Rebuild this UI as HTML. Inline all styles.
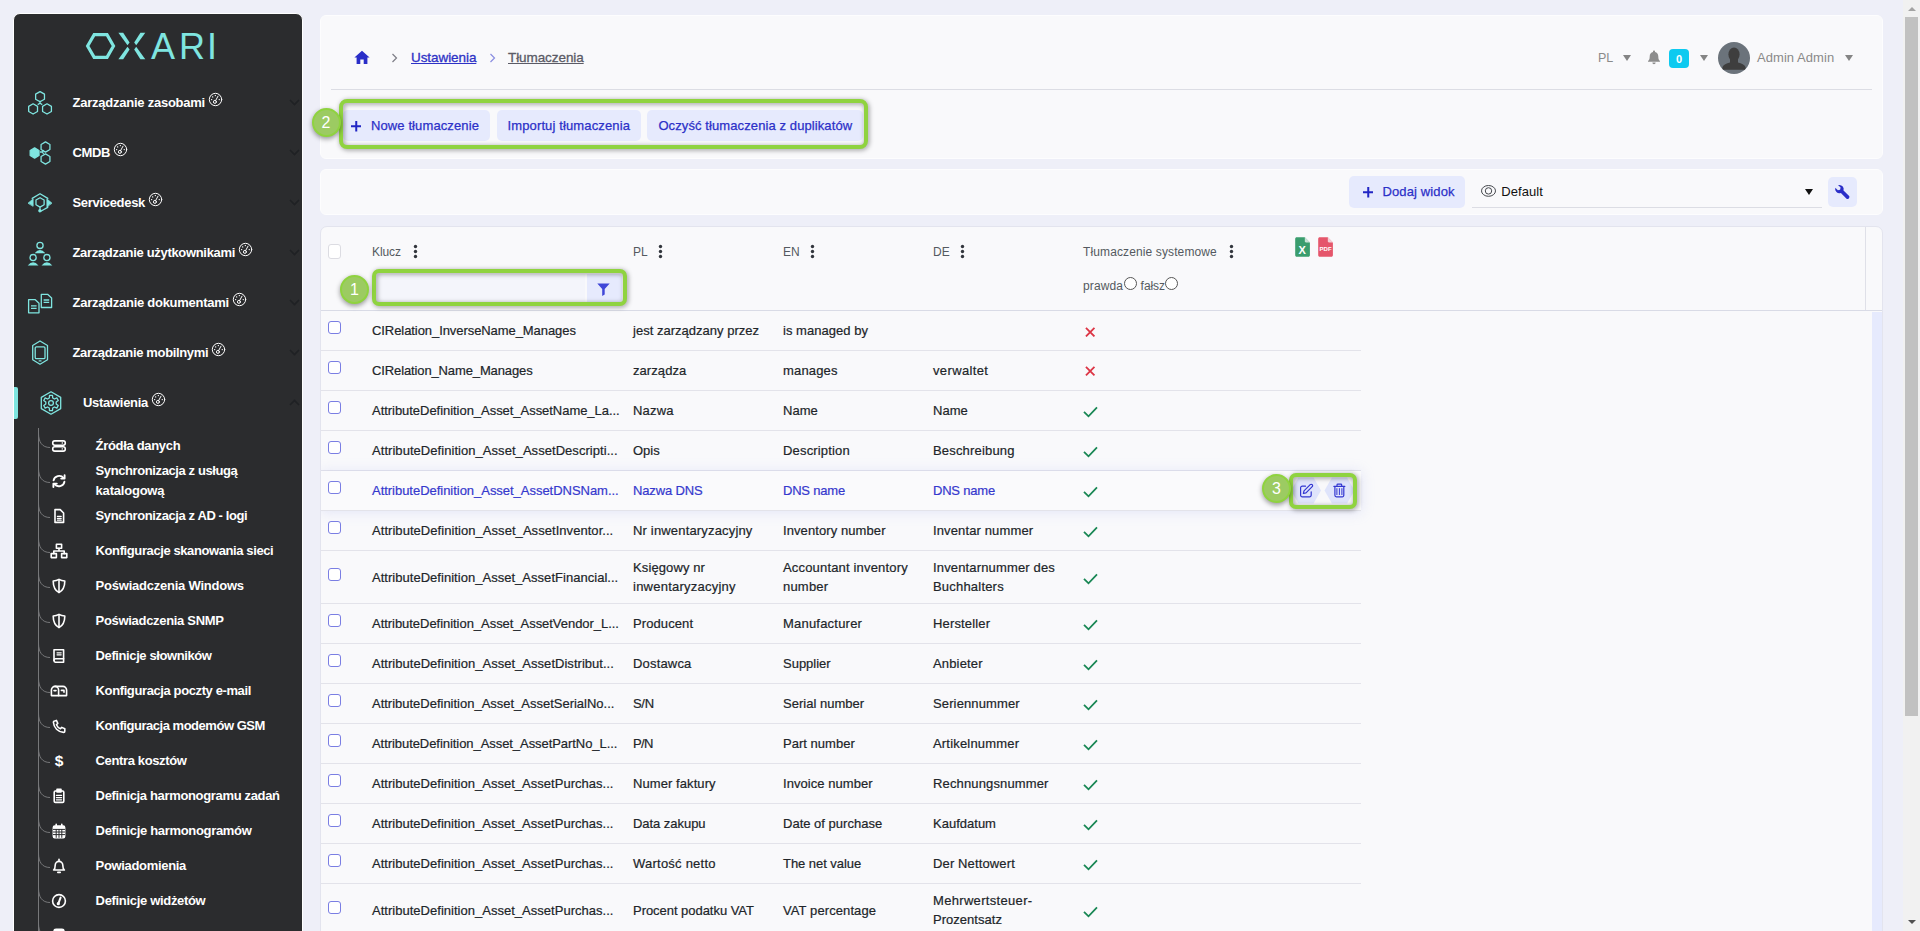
<!DOCTYPE html>
<html lang="pl">
<head>
<meta charset="utf-8">
<title>Tłumaczenia</title>
<style>
*{box-sizing:border-box;margin:0;padding:0}
html,body{width:1920px;height:931px;overflow:hidden}
body{background:#eeeff8;font-family:"Liberation Sans",sans-serif;font-size:13px;color:#212529;position:relative}
.abs{position:absolute}
svg{display:block}
/* ---------- sidebar ---------- */
#side{position:absolute;left:13px;top:13px;width:290px;height:930px;background:#2b2c2e;border:1px solid #fff;border-radius:7px 7px 0 0;overflow:hidden}
#side .logo{position:absolute;left:70px;top:16px}
.mi{display:block;position:absolute;left:0;width:288px;height:50px}
.mi .ic{position:absolute;left:12px;top:12px;width:28px;height:28px}
.mi .tx{position:absolute;left:58.5px;top:16px;font-size:13px;font-weight:700;color:#fff;white-space:nowrap;line-height:20px}
.mi .gg{position:absolute;top:15px}
.mi .ch{position:absolute;left:275px;top:22px}
.mi.act .ic{left:23px}
.mi.act .tx{left:69px}
.mi.act:before{content:"";position:absolute;left:0;top:10px;width:4px;height:32px;background:#7fe5e0;border-radius:0 2px 2px 0}
.si{display:block;position:absolute;left:0;width:288px;height:35px}
.si .ic{position:absolute;left:36px;top:10px;width:18px;height:16px}
.si .tx{position:absolute;left:81.6px;top:8px;font-size:13px;font-weight:700;color:#fff;white-space:nowrap;line-height:20px}
.si .br{position:absolute;left:24px;top:5px}
#tree{position:absolute;left:24px;top:414px;width:1px;height:520px;background:#77787a}
/* ---------- cards ---------- */
.card{position:absolute;left:320px;width:1563px;background:#f9f9fb;border-radius:6px;border:1px solid #fdfdfe}
#c1{top:15px;height:144px}
#c2{top:169px;height:46px}
#c3{top:226px;height:720px;border:1px solid #e3e4ee;border-radius:7px 7px 0 0}
/* annotations */
.gbox{position:absolute;border:4px solid #8fd33f;border-radius:8px;filter:drop-shadow(1px 1.5px 2.5px rgba(0,0,0,.42))}
.gnum{position:absolute;width:29px;height:29px;border-radius:50%;background:#9ccb62;border:2px solid #8fd33f;color:#fff;font-size:16px;line-height:26px;text-align:center;box-shadow:0 2px 5px rgba(0,0,0,.4)}
/* header */
.bc{position:absolute;top:50px;font-size:13.5px;line-height:16px;-webkit-text-stroke:.3px;text-decoration:underline;white-space:nowrap}
.btn{-webkit-text-stroke:.25px;border:0;padding:0;font-family:inherit;text-align:left;display:block;position:absolute;top:110px;height:31px;background:#e6eafd;border-radius:5px;color:#2c30c8;font-size:13px;line-height:31px;white-space:nowrap}
.btn span{position:absolute;top:0}
.tri{position:absolute;width:0;height:0;border-left:4px solid transparent;border-right:4px solid transparent;border-top:6px solid #858585}
/* table */
.th{position:absolute;font-size:12px;color:#545960;white-space:nowrap;line-height:14px}
.row{position:absolute;left:0;width:1040px;border-bottom:1px solid #e3e3ea}
.row .cb{-webkit-appearance:none;appearance:none;margin:0;display:block;position:absolute;left:7px;width:13px;height:13px;border:1px solid #7a7ee3;border-radius:3px;background:#fff}
.row .c{-webkit-text-stroke:.2px;position:absolute;font-size:13px;line-height:19px;color:#212529;white-space:nowrap}
.row.hv .c{color:#3538cd}
.row.hv{background:#fafafc;box-shadow:0 1px 12px 1px rgba(150,160,235,.2)}
.row svg.mk{position:absolute;left:762px}
</style>
</head>
<body>

<div id="side">
<svg class="logo" width="136" height="32" viewBox="0 0 136 32" role="img" aria-label="OXARI"><title>OXARI</title>
<g fill="none" stroke="#7fe5e0" stroke-width="3.2" stroke-linejoin="miter"><polygon points="3.6,16 10.2,4.6 23,4.6 29.5,16 23,27.4 10.2,27.4"/>
<g fill="#7fe5e0" stroke="none"><polygon points="34.4,2.8 39.2,2.8 45.6,12.5 43.5,15.2"/><polygon points="34.4,29.2 39.2,29.2 45.6,19.5 43.5,16.8"/><polygon points="61.3,2.8 56.4,2.8 50.2,12.5 52.2,15.2"/><polygon points="61.3,29.2 56.4,29.2 50.2,19.5 52.2,16.8"/></g></g>
<text y="28.9" font-family="Liberation Sans, sans-serif" font-size="36" fill="#7fe5e0" x="67 95.1 123">ARI</text></svg>
<a class="mi" style="top:63px"><div class="ic"><svg width="28" height="28" viewBox="0 0 28 28" fill="none" stroke="#7fe5e0" stroke-width="1.3" stroke-linejoin="round"><polygon points="14.05,2.6 9.63,5.15 9.63,10.25 14.05,12.8 18.47,10.25 18.47,5.15"/><polygon points="7.1,14.8 2.68,17.35 2.68,22.45 7.1,25 11.52,22.45 11.52,17.35"/><polygon points="21,14.8 16.58,17.35 16.58,22.45 21,25 25.42,22.45 25.42,17.35"/><path d="M14 11.8v2.4M14 14.2l-2.3 1.4M14 14.2l2.3 1.4"/></svg></div><div class="tx" style="letter-spacing:-0.24px">Zarządzanie zasobami</div><svg class="gg" style="left:193.8px" width="15" height="15" viewBox="0 0 15 15" fill="none" stroke="#fff" stroke-width="1" stroke-linecap="round"><circle cx="7.5" cy="7.5" r="6.2"/><circle cx="6.9" cy="9.9" r="1.5"/><path d="M7.6 8.6 L10 4.2"/><path d="M3.6 7.6h.1M4.6 4.9h.1M7.3 3.6h.1M11.2 7.6h.1" stroke-width="1.3"/></svg><svg class="ch" width="11" height="7" viewBox="0 0 11 7" fill="none" stroke="#1f2124" stroke-width="1.6"><path d="M1 1l4.5 4.5L10 1"/></svg></a>
<a class="mi" style="top:113px"><div class="ic"><svg width="28" height="28" viewBox="0 0 28 28" fill="none" stroke="#7fe5e0" stroke-width="1.3" stroke-linejoin="round"><polygon fill="#7fe5e0" points="8.6,8.9 4.18,11.45 4.18,16.55 8.6,19.1 13.02,16.55 13.02,11.45"/><polygon fill="none" points="19.5,2.9 15.08,5.45 15.08,10.55 19.5,13.1 23.92,10.55 23.92,5.45"/><polygon fill="none" points="19.5,14.9 15.08,17.45 15.08,22.55 19.5,25.1 23.92,22.55 23.92,17.45"/><path d="M14 13h2.4M16.4 13l1.2-1.8M16.4 13l1.2 1.8"/></svg></div><div class="tx" style="letter-spacing:-0.37px">CMDB</div><svg class="gg" style="left:98.8px" width="15" height="15" viewBox="0 0 15 15" fill="none" stroke="#fff" stroke-width="1" stroke-linecap="round"><circle cx="7.5" cy="7.5" r="6.2"/><circle cx="6.9" cy="9.9" r="1.5"/><path d="M7.6 8.6 L10 4.2"/><path d="M3.6 7.6h.1M4.6 4.9h.1M7.3 3.6h.1M11.2 7.6h.1" stroke-width="1.3"/></svg><svg class="ch" width="11" height="7" viewBox="0 0 11 7" fill="none" stroke="#1f2124" stroke-width="1.6"><path d="M1 1l4.5 4.5L10 1"/></svg></a>
<a class="mi" style="top:163px"><div class="ic"><svg width="28" height="28" viewBox="0 0 28 28" fill="none" stroke="#7fe5e0" stroke-width="1.3" stroke-linejoin="round" stroke-linecap="round"><polygon points="14.05,8.7 9.98,11.05 9.98,15.75 14.05,18.1 18.12,15.75 18.12,11.05"/><path d="M6.2 9.4 L14 4.7 L21.8 9.4"/><path d="M21.7 16.5 L21.7 18.4 L15.2 22"/><path d="M14 18.7 L14 20.5"/><path d="M2.3 14 L7.1 9.9 L7.1 16.9 Z" fill="#7fe5e0" stroke-width=".8"/><path d="M25.7 14 L20.9 9.9 L20.9 17.5 Z" fill="#7fe5e0" stroke-width=".8"/><circle cx="13.9" cy="21.8" r="1.7" fill="#7fe5e0" stroke="none"/></svg></div><div class="tx" style="letter-spacing:-0.31px">Servicedesk</div><svg class="gg" style="left:133.8px" width="15" height="15" viewBox="0 0 15 15" fill="none" stroke="#fff" stroke-width="1" stroke-linecap="round"><circle cx="7.5" cy="7.5" r="6.2"/><circle cx="6.9" cy="9.9" r="1.5"/><path d="M7.6 8.6 L10 4.2"/><path d="M3.6 7.6h.1M4.6 4.9h.1M7.3 3.6h.1M11.2 7.6h.1" stroke-width="1.3"/></svg><svg class="ch" width="11" height="7" viewBox="0 0 11 7" fill="none" stroke="#1f2124" stroke-width="1.6"><path d="M1 1l4.5 4.5L10 1"/></svg></a>
<a class="mi" style="top:213px"><div class="ic"><svg width="28" height="28" viewBox="0 0 28 28" fill="none" stroke="#7fe5e0" stroke-width="1.3"><circle cx="14" cy="6.4" r="3.1"/><path d="M8.6 14.3 Q14 7.6 19.4 14.3 Z" fill="#7fe5e0" stroke="none"/><circle cx="7.1" cy="18.6" r="3.1"/><path d="M1.7 26.5 Q7.1 19.8 12.5 26.5 Z" fill="#7fe5e0" stroke="none"/><circle cx="20.9" cy="18.6" r="3.1"/><path d="M15.5 26.5 Q20.9 19.8 26.3 26.5 Z" fill="#7fe5e0" stroke="none"/></svg></div><div class="tx" style="letter-spacing:-0.32px">Zarządzanie użytkownikami</div><svg class="gg" style="left:223.8px" width="15" height="15" viewBox="0 0 15 15" fill="none" stroke="#fff" stroke-width="1" stroke-linecap="round"><circle cx="7.5" cy="7.5" r="6.2"/><circle cx="6.9" cy="9.9" r="1.5"/><path d="M7.6 8.6 L10 4.2"/><path d="M3.6 7.6h.1M4.6 4.9h.1M7.3 3.6h.1M11.2 7.6h.1" stroke-width="1.3"/></svg><svg class="ch" width="11" height="7" viewBox="0 0 11 7" fill="none" stroke="#1f2124" stroke-width="1.6"><path d="M1 1l4.5 4.5L10 1"/></svg></a>
<a class="mi" style="top:263px"><div class="ic"><svg width="28" height="28" viewBox="0 0 28 28" fill="none" stroke="#7fe5e0" stroke-width="1.3" stroke-linejoin="round"><path d="M15.3 5.3h6.3l4 3.6v9.6h-10.3z"/><path d="M17.6 11h5.6M17.6 13.4h5.6"/><path d="M2.6 10.6h6.4l4 3.6v9.6H2.6z" fill="#2b2c2e"/><path d="M5 16.9h5.6M5 19.4h5.6"/></svg></div><div class="tx" style="letter-spacing:-0.27px">Zarządzanie dokumentami</div><svg class="gg" style="left:217.6px" width="15" height="15" viewBox="0 0 15 15" fill="none" stroke="#fff" stroke-width="1" stroke-linecap="round"><circle cx="7.5" cy="7.5" r="6.2"/><circle cx="6.9" cy="9.9" r="1.5"/><path d="M7.6 8.6 L10 4.2"/><path d="M3.6 7.6h.1M4.6 4.9h.1M7.3 3.6h.1M11.2 7.6h.1" stroke-width="1.3"/></svg><svg class="ch" width="11" height="7" viewBox="0 0 11 7" fill="none" stroke="#1f2124" stroke-width="1.6"><path d="M1 1l4.5 4.5L10 1"/></svg></a>
<a class="mi" style="top:313px"><div class="ic"><svg width="28" height="28" viewBox="0 0 28 28" fill="none" stroke="#7fe5e0" stroke-width="1.3" stroke-linejoin="round"><path d="M14 2 L21.5 6.5 V20.7 L14 25.2 L6.7 20.7 V6.5 Z"/><rect x="9.2" y="7.9" width="9.8" height="11.8" rx="1.2"/><path d="M13.2 21.9h1.8" stroke-linecap="round"/></svg></div><div class="tx" style="letter-spacing:-0.35px">Zarządzanie mobilnymi</div><svg class="gg" style="left:197.1px" width="15" height="15" viewBox="0 0 15 15" fill="none" stroke="#fff" stroke-width="1" stroke-linecap="round"><circle cx="7.5" cy="7.5" r="6.2"/><circle cx="6.9" cy="9.9" r="1.5"/><path d="M7.6 8.6 L10 4.2"/><path d="M3.6 7.6h.1M4.6 4.9h.1M7.3 3.6h.1M11.2 7.6h.1" stroke-width="1.3"/></svg><svg class="ch" width="11" height="7" viewBox="0 0 11 7" fill="none" stroke="#1f2124" stroke-width="1.6"><path d="M1 1l4.5 4.5L10 1"/></svg></a>
<a class="mi act" style="top:363px"><div class="ic"><svg width="28" height="28" viewBox="0 0 28 28" fill="none" stroke="#7fe5e0" stroke-width="1.3" stroke-linejoin="round"><polygon points="14,2.8 4.3,8.4 4.3,19.6 14,25.2 23.7,19.6 23.7,8.4"/><polygon points="15.73,8.99 15.47,6.44 12.53,6.44 12.27,8.99 10.52,10 8.19,8.95 6.72,11.49 8.8,12.99 8.8,15.01 6.72,16.51 8.19,19.05 10.52,18 12.27,19.01 12.53,21.56 15.47,21.56 15.73,19.01 17.48,18 19.81,19.05 21.28,16.51 19.2,15.01 19.2,12.99 21.28,11.49 19.81,8.95 17.48,10"/><circle cx="14" cy="14" r="2.4"/></svg></div><div class="tx" style="letter-spacing:-0.29px">Ustawienia</div><svg class="gg" style="left:136.8px" width="15" height="15" viewBox="0 0 15 15" fill="none" stroke="#fff" stroke-width="1" stroke-linecap="round"><circle cx="7.5" cy="7.5" r="6.2"/><circle cx="6.9" cy="9.9" r="1.5"/><path d="M7.6 8.6 L10 4.2"/><path d="M3.6 7.6h.1M4.6 4.9h.1M7.3 3.6h.1M11.2 7.6h.1" stroke-width="1.3"/></svg><svg class="ch" width="11" height="7" viewBox="0 0 11 7" fill="none" stroke="#1f2124" stroke-width="1.6"><path d="M1 6l4.5-4.5L10 6"/></svg></a>
<div id="tree"></div>
<a class="si" style="top:414px"><svg class="br" width="13" height="16" viewBox="0 0 13 16" fill="none" stroke="#77787a" stroke-width="1"><path d="M.5 0C.5 9 4 14.5 12 14.5"/></svg><div class="ic"><svg width="18" height="16" viewBox="0 0 18 16" stroke="#fff" fill="none" stroke-width="1.6" stroke-linecap="round" stroke-linejoin="round" ><rect x="2.7" y="2.9" width="12.6" height="4.3" rx="2.1"/><rect x="2.7" y="8.8" width="12.6" height="4.3" rx="2.1"/><path d="M12.2 5h.2M12.2 10.9h.2" stroke-width="1.3"/></svg></div><div class="tx" style="letter-spacing:-0.32px">Źródła danych</div></a>
<a class="si" style="top:449px"><svg class="br" width="13" height="16" viewBox="0 0 13 16" fill="none" stroke="#77787a" stroke-width="1"><path d="M.5 0C.5 9 4 14.5 12 14.5"/></svg><div class="ic"><svg width="18" height="16" viewBox="0 0 18 16" stroke="#fff" fill="none" stroke-width="1.6" stroke-linecap="round" stroke-linejoin="round" ><g stroke-width="1.9"><path d="M3.6 7.4A5.6 5.2 0 0 1 13.6 5"/><path d="M14.6 2.2v3.4H11.2" /><path d="M14.4 8.8A5.6 5.2 0 0 1 4.4 11.2"/><path d="M3.4 14v-3.4H6.8"/></g></svg></div><div class="tx" style="top:-2px"><span style="letter-spacing:-0.4px">Synchronizacja z usługą</span><br><span style="letter-spacing:-0.21px">katalogową</span></div></a>
<a class="si" style="top:484px"><svg class="br" width="13" height="16" viewBox="0 0 13 16" fill="none" stroke="#77787a" stroke-width="1"><path d="M.5 0C.5 9 4 14.5 12 14.5"/></svg><div class="ic"><svg width="18" height="16" viewBox="0 0 18 16" stroke="#fff" fill="none" stroke-width="1.6" stroke-linecap="round" stroke-linejoin="round" ><path d="M5 1.6h5.2l3.4 3.4v9.4H5z"/><path d="M7.4 8.4h3.8M7.4 10.4h3.8M7.4 12.2h3.8" stroke-width="1.2"/></svg></div><div class="tx" style="letter-spacing:-0.4px">Synchronizacja z AD - logi</div></a>
<a class="si" style="top:519px"><svg class="br" width="13" height="16" viewBox="0 0 13 16" fill="none" stroke="#77787a" stroke-width="1"><path d="M.5 0C.5 9 4 14.5 12 14.5"/></svg><div class="ic"><svg width="18" height="16" viewBox="0 0 18 16" stroke="#fff" fill="none" stroke-width="1.6" stroke-linecap="round" stroke-linejoin="round" ><rect x="6.4" y="1.2" width="5.2" height="4"/><rect x="1.2" y="10.6" width="5.2" height="4"/><rect x="11.6" y="10.6" width="5.2" height="4"/><path d="M9 5.2v2.8M3.8 10.6V8h10.4v2.6" /></svg></div><div class="tx" style="letter-spacing:-0.4px">Konfiguracje skanowania sieci</div></a>
<a class="si" style="top:554px"><svg class="br" width="13" height="16" viewBox="0 0 13 16" fill="none" stroke="#77787a" stroke-width="1"><path d="M.5 0C.5 9 4 14.5 12 14.5"/></svg><div class="ic"><svg width="18" height="16" viewBox="0 0 18 16" stroke="#fff" fill="none" stroke-width="1.6" stroke-linecap="round" stroke-linejoin="round" ><path d="M9 1.4c2 1.2 3.8 1.6 5.8 1.6 0 5.6-1.6 9.4-5.8 11.6C4.8 12.4 3.2 8.6 3.2 3c2 0 3.8-.4 5.8-1.6z"/><path d="M9 1.8v12.4"/></svg></div><div class="tx" style="letter-spacing:-0.23px">Poświadczenia Windows</div></a>
<a class="si" style="top:589px"><svg class="br" width="13" height="16" viewBox="0 0 13 16" fill="none" stroke="#77787a" stroke-width="1"><path d="M.5 0C.5 9 4 14.5 12 14.5"/></svg><div class="ic"><svg width="18" height="16" viewBox="0 0 18 16" stroke="#fff" fill="none" stroke-width="1.6" stroke-linecap="round" stroke-linejoin="round" ><path d="M9 1.4c2 1.2 3.8 1.6 5.8 1.6 0 5.6-1.6 9.4-5.8 11.6C4.8 12.4 3.2 8.6 3.2 3c2 0 3.8-.4 5.8-1.6z"/><path d="M9 1.8v12.4"/></svg></div><div class="tx" style="letter-spacing:-0.31px">Poświadczenia SNMP</div></a>
<a class="si" style="top:624px"><svg class="br" width="13" height="16" viewBox="0 0 13 16" fill="none" stroke="#77787a" stroke-width="1"><path d="M.5 0C.5 9 4 14.5 12 14.5"/></svg><div class="ic"><svg width="18" height="16" viewBox="0 0 18 16" stroke="#fff" fill="none" stroke-width="1.6" stroke-linecap="round" stroke-linejoin="round" ><path d="M4 1.8h9.6v12.4H5.4A1.6 1.6 0 0 1 4 12.6z"/><path d="M4 12.4a1.6 1.6 0 0 1 1.6-1.6h8"/><path d="M7 4.8h4.2M7 6.8h4.2" stroke-width="1.2"/></svg></div><div class="tx" style="letter-spacing:-0.4px">Definicje słowników</div></a>
<a class="si" style="top:659px"><svg class="br" width="13" height="16" viewBox="0 0 13 16" fill="none" stroke="#77787a" stroke-width="1"><path d="M.5 0C.5 9 4 14.5 12 14.5"/></svg><div class="ic"><svg width="18" height="16" viewBox="0 0 18 16" stroke="#fff" fill="none" stroke-width="1.6" stroke-linecap="round" stroke-linejoin="round" ><path d="M1.4 12.6V7a3.6 3.6 0 0 1 3.6-3.6h8A3.6 3.6 0 0 1 16.6 7v5.6z"/><path d="M8.6 12.6V7a3.6 3.6 0 0 0-3.6-3.6"/><path d="M4 7.6h2M11.4 7.4h2.6v1.8"/></svg></div><div class="tx" style="letter-spacing:-0.39px">Konfiguracja poczty e-mail</div></a>
<a class="si" style="top:694px"><svg class="br" width="13" height="16" viewBox="0 0 13 16" fill="none" stroke="#77787a" stroke-width="1"><path d="M.5 0C.5 9 4 14.5 12 14.5"/></svg><div class="ic"><svg width="18" height="16" viewBox="0 0 18 16" stroke="#fff" fill="none" stroke-width="1.6" stroke-linecap="round" stroke-linejoin="round" ><path d="M6.4 2.4 7.8 5.4 6.4 6.8c.8 1.8 2.2 3.2 4 4l1.4-1.4 3 1.4v2.4c0 .6-.6 1.2-1.2 1.2C8 14 3.8 9.8 3.4 4.2c0-.6.6-1.2 1.2-1.2z"/></svg></div><div class="tx" style="letter-spacing:-0.47px">Konfiguracja modemów GSM</div></a>
<a class="si" style="top:729px"><svg class="br" width="13" height="16" viewBox="0 0 13 16" fill="none" stroke="#77787a" stroke-width="1"><path d="M.5 0C.5 9 4 14.5 12 14.5"/></svg><div class="ic"><span style="font:700 15.5px/16px 'Liberation Sans',sans-serif;color:#fff;display:block;width:18px;text-align:center;margin-top:0px">$</span></div><div class="tx" style="letter-spacing:-0.37px">Centra kosztów</div></a>
<a class="si" style="top:764px"><svg class="br" width="13" height="16" viewBox="0 0 13 16" fill="none" stroke="#77787a" stroke-width="1"><path d="M.5 0C.5 9 4 14.5 12 14.5"/></svg><div class="ic"><svg width="18" height="16" viewBox="0 0 18 16" stroke="#fff" fill="none" stroke-width="1.6" stroke-linecap="round" stroke-linejoin="round" ><rect x="4.2" y="3" width="9.6" height="11.4" rx="1.2"/><path d="M7 1.4h4v2.6H7z" fill="#fff"/><path d="M6.4 7.4h5.2M6.4 9.6h5.2M6.4 11.8h5.2" stroke-width="1.2"/></svg></div><div class="tx" style="letter-spacing:-0.34px">Definicja harmonogramu zadań</div></a>
<a class="si" style="top:799px"><svg class="br" width="13" height="16" viewBox="0 0 13 16" fill="none" stroke="#77787a" stroke-width="1"><path d="M.5 0C.5 9 4 14.5 12 14.5"/></svg><div class="ic"><svg width="18" height="16" viewBox="0 0 18 16" stroke="#fff" fill="none" stroke-width="1.6" stroke-linecap="round" stroke-linejoin="round" ><rect x="3.4" y="3" width="11.2" height="11.6" rx="1.4" fill="#fff"/><path d="M6.2 1.2v3M11.8 1.2v3"/><path d="M3.4 6.4h11.2M3.4 9h11.2M3.4 11.6h11.2M6.2 6.4v8M9 6.4v8M11.8 6.4v8" stroke="#2b2c2e" stroke-width="1"/></svg></div><div class="tx" style="letter-spacing:-0.32px">Definicje harmonogramów</div></a>
<a class="si" style="top:834px"><svg class="br" width="13" height="16" viewBox="0 0 13 16" fill="none" stroke="#77787a" stroke-width="1"><path d="M.5 0C.5 9 4 14.5 12 14.5"/></svg><div class="ic"><svg width="18" height="16" viewBox="0 0 18 16" stroke="#fff" fill="none" stroke-width="1.6" stroke-linecap="round" stroke-linejoin="round" ><path d="M3.6 12c1.2-1 1.6-2.6 1.6-4.8a3.8 3.8 0 0 1 7.6 0c0 2.2.4 3.8 1.6 4.8z"/><path d="M7.8 14.4h2.4"/><path d="M9 1.4v1.6"/></svg></div><div class="tx" style="letter-spacing:-0.33px">Powiadomienia</div></a>
<a class="si" style="top:869px"><svg class="br" width="13" height="16" viewBox="0 0 13 16" fill="none" stroke="#77787a" stroke-width="1"><path d="M.5 0C.5 9 4 14.5 12 14.5"/></svg><div class="ic"><svg width="18" height="16" viewBox="0 0 18 16" stroke="#fff" fill="none" stroke-width="1.6" stroke-linecap="round" stroke-linejoin="round" ><circle cx="9" cy="8" r="6.4"/><path d="M8.4 10.4 10.6 4.6" stroke-width="2"/><circle cx="8.3" cy="10.7" r=".8" fill="#fff"/></svg></div><div class="tx" style="letter-spacing:-0.32px">Definicje widżetów</div></a>
<a class="si" style="top:904px"><svg class="br" width="13" height="16" viewBox="0 0 13 16" fill="none" stroke="#77787a" stroke-width="1"><path d="M.5 0C.5 9 4 14.5 12 14.5"/></svg><div class="ic"><svg width="18" height="16" viewBox="0 0 18 16" stroke="#fff" fill="none" stroke-width="1.6" stroke-linecap="round" stroke-linejoin="round" ><rect x="4" y="1.4" width="10" height="13" rx="2" fill="#fff"/></svg></div><div class="tx" style="letter-spacing:0.02px">Menedżer licencji</div></a>
</div>
<div class="card" id="c1"></div>
<div class="abs" style="left:331px;top:89px;width:1541px;height:1px;background:#dcdde4"></div>
<svg class="abs" style="left:354px;top:50px" width="16" height="15" viewBox="0 0 16 15"><path fill="#2a2ec8" d="M8 .8 15.6 7.6h-2.2v6.4H9.7V9.6H6.3V14H2.6V7.6H.4z"/></svg>
<svg class="abs" style="left:391px;top:53px" width="7" height="10" viewBox="0 0 7 10" fill="none" stroke="#7d7d85" stroke-width="1.2"><path d="M1.5 1l4 4-4 4"/></svg>
<a class="bc" style="left:411px;color:#2e32c6;letter-spacing:-0.07px">Ustawienia</a>
<svg class="abs" style="left:489px;top:53px" width="7" height="10" viewBox="0 0 7 10" fill="none" stroke="#8a8de0" stroke-width="1.2"><path d="M1.5 1l4 4-4 4"/></svg>
<a class="bc" style="left:508px;color:#5b5b66;letter-spacing:-0.08px">Tłumaczenia</a>
<div class="abs" style="left:1598px;top:51px;font-size:12.5px;line-height:15px;color:#8a8a8a">PL</div>
<div class="tri" style="left:1623px;top:55px"></div>
<svg class="abs" style="left:1647px;top:50px" width="14" height="15" viewBox="0 0 14 15"><path fill="#8c8c8c" d="M7 .6c.6 0 1 .4 1 1v.5c2 .5 3.3 2.2 3.3 4.3 0 2.6.7 3.7 1.6 4.5.3.3.1.9-.4.9H1.5c-.5 0-.7-.6-.4-.9.9-.8 1.6-1.9 1.6-4.5 0-2.1 1.3-3.8 3.3-4.3v-.5c0-.6.4-1 1-1zM5.4 12.6h3.2c0 .9-.7 1.6-1.6 1.6s-1.6-.7-1.6-1.6z"/></svg>
<div class="abs" style="left:1669px;top:49px;width:20px;height:19px;border-radius:4px;background:#0dcaf0;color:#fff;font-size:11px;font-weight:700;line-height:20px;text-align:center">0</div>
<div class="tri" style="left:1700px;top:55px"></div>
<svg class="abs" style="left:1718px;top:42px" width="32" height="32" viewBox="0 0 32 32"><defs><clipPath id="av"><circle cx="16" cy="16" r="16"/></clipPath></defs><circle cx="16" cy="16" r="16" fill="#6b737b"/><g clip-path="url(#av)" fill="#3e3e3e"><ellipse cx="16" cy="12.5" rx="5.6" ry="7"/><path d="M12 17h8v3.6c3.6 1.2 6.6 2 7.6 4.6v2.6H4.4v-2.6c1-2.6 4-3.4 7.6-4.6z"/></g></svg>
<div class="abs" style="left:1757px;top:50px;font-size:13px;line-height:16px;color:#8a8a8a;white-space:nowrap;letter-spacing:0.06px">Admin Admin</div>
<div class="tri" style="left:1845px;top:55px"></div>
<button type="button" class="btn" style="left:342.5px;width:147.5px"><svg class="abs" style="left:8.3px;top:11px" width="10.5" height="10.5" viewBox="0 0 11 11" stroke="#2226c4" stroke-width="2.1" fill="none"><path d="M5.5 0v11M0 5.5h11"/></svg><span style="left:28.5px;letter-spacing:0.11px">Nowe tłumaczenie</span></button>
<button type="button" class="btn" style="left:497px;width:143.5px"><span style="left:10.5px;letter-spacing:0.13px">Importuj tłumaczenia</span></button>
<button type="button" class="btn" style="left:647px;width:215.5px"><span style="left:11.399999999999977px;letter-spacing:0.1px">Oczyść tłumaczenia z duplikatów</span></button>
<div class="gbox" style="left:339px;top:99px;width:529px;height:50px"></div>
<div class="gnum" style="left:311.5px;top:108px">2</div>
<div class="card" id="c2"></div>
<button type="button" class="btn" style="left:1349px;top:176px;width:116px;height:32px;line-height:32px"><svg class="abs" style="left:13.5px;top:11px" width="10.5" height="10.5" viewBox="0 0 11 11" stroke="#2226c4" stroke-width="2.1" fill="none"><path d="M5.5 0v11M0 5.5h11"/></svg><span style="left:33.4px;letter-spacing:0.13px">Dodaj widok</span></button>
<div class="abs" style="left:1472px;top:207px;width:350px;height:1px;background:#dcdde4"></div>
<svg class="abs" style="left:1481px;top:185px" width="16" height="12" viewBox="0 0 16 12" fill="none" stroke="#45484d" stroke-width="1"><ellipse cx="7.5" cy="5.9" rx="7" ry="5.4"/><circle cx="7.5" cy="5.9" r="3.2"/></svg>
<div class="abs" style="left:1501.3px;top:184px;font-size:13px;line-height:15px;color:#111;letter-spacing:0.07px">Default</div>
<div class="tri" style="left:1805px;top:189px;border-top-color:#111;border-left-width:4px;border-right-width:4px"></div>
<div class="abs" style="left:1827.7px;top:177px;width:29px;height:30px;border-radius:5px;background:#e6eafd"><svg class="abs" style="left:6.5px;top:7px" width="16" height="16" viewBox="0 0 16 16"><path fill="#2a2ec8" d="M5.2.9a4.3 4.3 0 0 1 4.3 5.5l5.4 5.4c.7.7.7 1.7 0 2.4l-.2.2c-.7.7-1.7.7-2.4 0L6.9 9a4.3 4.3 0 0 1-5.6-5.3l2.6 2.6 2.2-.5.5-2.2L4 1.1c.4-.1.8-.2 1.2-.2z"/></svg></div>
<div class="card" id="c3"></div>
<div class="abs" style="left:321px;top:310px;width:1561px;height:1px;background:#d9dbe6"></div>
<div class="abs" style="left:1865px;top:227px;width:1px;height:83px;background:#dfe0e8"></div>
<div class="abs" style="left:1872px;top:311.5px;width:10px;height:620px;background:#e6eafd"></div>
<input type="checkbox" class="abs" style="-webkit-appearance:none;appearance:none;margin:0;display:block;left:328px;top:244px;width:13px;height:15px;border:1px solid #dcdce2;border-radius:3px;background:#fff">
<div class="th" style="left:372px;top:245px;letter-spacing:-0.11px">Klucz</div><svg class="abs" style="left:412.8px;top:244px" width="5" height="15" viewBox="0 0 5 15"><circle cx="2.5" cy="2.5" r="1.7" fill="#32363d"/><circle cx="2.5" cy="7.5" r="1.7" fill="#32363d"/><circle cx="2.5" cy="12.5" r="1.7" fill="#32363d"/></svg>
<div class="th" style="left:633px;top:245px">PL</div><svg class="abs" style="left:658px;top:244px" width="5" height="15" viewBox="0 0 5 15"><circle cx="2.5" cy="2.5" r="1.7" fill="#32363d"/><circle cx="2.5" cy="7.5" r="1.7" fill="#32363d"/><circle cx="2.5" cy="12.5" r="1.7" fill="#32363d"/></svg>
<div class="th" style="left:783px;top:245px">EN</div><svg class="abs" style="left:809.5px;top:244px" width="5" height="15" viewBox="0 0 5 15"><circle cx="2.5" cy="2.5" r="1.7" fill="#32363d"/><circle cx="2.5" cy="7.5" r="1.7" fill="#32363d"/><circle cx="2.5" cy="12.5" r="1.7" fill="#32363d"/></svg>
<div class="th" style="left:933px;top:245px">DE</div><svg class="abs" style="left:959.8px;top:244px" width="5" height="15" viewBox="0 0 5 15"><circle cx="2.5" cy="2.5" r="1.7" fill="#32363d"/><circle cx="2.5" cy="7.5" r="1.7" fill="#32363d"/><circle cx="2.5" cy="12.5" r="1.7" fill="#32363d"/></svg>
<div class="th" style="left:1083px;top:245px;letter-spacing:0.12px">Tłumaczenie systemowe</div><svg class="abs" style="left:1228.9px;top:244px" width="5" height="15" viewBox="0 0 5 15"><circle cx="2.5" cy="2.5" r="1.7" fill="#32363d"/><circle cx="2.5" cy="7.5" r="1.7" fill="#32363d"/><circle cx="2.5" cy="12.5" r="1.7" fill="#32363d"/></svg>
<div class="th" style="left:1083px;top:279px;letter-spacing:0.11px">prawda</div>
<input type="radio" name="sys" class="abs" style="-webkit-appearance:none;appearance:none;margin:0;display:block;left:1124px;top:277.3px;width:13px;height:13px;border:1px solid #555;border-radius:50%;background:#fff">
<div class="th" style="left:1140.6px;top:279px;letter-spacing:-0.05px">fałsz</div>
<input type="radio" name="sys" class="abs" style="-webkit-appearance:none;appearance:none;margin:0;display:block;left:1165.3px;top:277.3px;width:13px;height:13px;border:1px solid #555;border-radius:50%;background:#fff">
<svg class="abs" style="left:1295px;top:236.5px" width="15.4" height="20.2" viewBox="0 0 16 21"><path fill="#3a9d6e" d="M1.8.3h8.4l5.3 5.3v13.3c0 .9-.7 1.6-1.6 1.6H1.8c-.9 0-1.6-.7-1.6-1.6V1.9C.2 1 .9.3 1.8.3z"/><path fill="#f9f9fb" d="M10.2.3v4.1c0 .7.5 1.2 1.2 1.2h4.1z" opacity=".75"/><text x="7.6" y="17.6" text-anchor="middle" font-family="Liberation Sans, sans-serif" font-weight="700" font-size="11.5" fill="#fff">X</text></svg>
<svg class="abs" style="left:1318.3px;top:236.5px" width="15.4" height="20.2" viewBox="0 0 16 21"><path fill="#e5566b" d="M1.8.3h8.4l5.3 5.3v13.3c0 .9-.7 1.6-1.6 1.6H1.8c-.9 0-1.6-.7-1.6-1.6V1.9C.2 1 .9.3 1.8.3z"/><path fill="#f9f9fb" d="M10.2.3v4.1c0 .7.5 1.2 1.2 1.2h4.1z" opacity=".75"/><text x="7.9" y="14.6" text-anchor="middle" font-family="Liberation Sans, sans-serif" font-weight="700" font-size="6.4" fill="#fff" textLength="12.5" lengthAdjust="spacingAndGlyphs">PDF</text></svg>
<input type="text" class="abs" style="display:block;border:0;outline:0;padding:0 8px;font:13px 'Liberation Sans',sans-serif;left:375px;top:274px;width:210px;height:28px;background:#f4f5fb;border-radius:4px 0 0 4px">
<div class="abs" style="left:587px;top:274px;width:35px;height:28px;background:#e6eafd;border-radius:0 4px 4px 0"><svg class="abs" style="left:10.2px;top:9px" width="13" height="13" viewBox="0 0 13 13"><path fill="#4047d8" d="M.3.5h12.4L7.7 6.1v5.3l-2.5 1.5V6.1z"/></svg></div>
<div class="gbox" style="left:372px;top:268.5px;width:254.5px;height:37px;border-radius:7px"></div>
<div class="gnum" style="left:340px;top:275px">1</div>
<div class="abs" style="left:321px;top:311px;width:1551px;height:620px;overflow:hidden">
<div class="row" style="top:0.5px;height:39px"><input type="checkbox" class="cb" style="top:9.5px"><div class="c" style="left:51px;top:9.5px"><span style="letter-spacing:-0.07px">CIRelation_InverseName_Manages</span></div><div class="c" style="left:312px;top:9.5px"><span style="letter-spacing:0.02px">jest zarządzany przez</span></div><div class="c" style="left:462px;top:9.5px"><span style="letter-spacing:0.03px">is managed by</span></div><svg class="mk" style="top:15.4px;left:764.3px" width="10.4" height="10.4" viewBox="0 0 11 11" fill="none" stroke="#dc3545" stroke-width="1.9"><path d="M1 1l9 9M10 1l-9 9"/></svg></div>
<div class="row" style="top:39.5px;height:40px"><input type="checkbox" class="cb" style="top:10px"><div class="c" style="left:51px;top:10px"><span style="letter-spacing:-0.12px">CIRelation_Name_Manages</span></div><div class="c" style="left:312px;top:10px"><span style="letter-spacing:0.07px">zarządza</span></div><div class="c" style="left:462px;top:10px"><span style="letter-spacing:0.16px">manages</span></div><div class="c" style="left:612px;top:10px"><span style="letter-spacing:0.36px">verwaltet</span></div><svg class="mk" style="top:15.9px;left:764.3px" width="10.4" height="10.4" viewBox="0 0 11 11" fill="none" stroke="#dc3545" stroke-width="1.9"><path d="M1 1l9 9M10 1l-9 9"/></svg></div>
<div class="row" style="top:79.5px;height:40px"><input type="checkbox" class="cb" style="top:10px"><div class="c" style="left:51px;top:10px"><span style="letter-spacing:-0.04px">AttributeDefinition_Asset_AssetName_La...</span></div><div class="c" style="left:312px;top:10px"><span style="letter-spacing:0.17px">Nazwa</span></div><div class="c" style="left:462px;top:10px"><span style="letter-spacing:0.03px">Name</span></div><div class="c" style="left:612px;top:10px"><span style="letter-spacing:0.03px">Name</span></div><svg class="mk" style="top:15.3px" width="15" height="12" viewBox="0 0 15 12" fill="none" stroke="#198754" stroke-width="1.8"><path d="M1 5.8l4.5 4.5L14 1.4"/></svg></div>
<div class="row" style="top:119.5px;height:40px"><input type="checkbox" class="cb" style="top:10px"><div class="c" style="left:51px;top:10px"><span style="letter-spacing:0.05px">AttributeDefinition_Asset_AssetDescripti...</span></div><div class="c" style="left:312px;top:10px"><span style="letter-spacing:-0.03px">Opis</span></div><div class="c" style="left:462px;top:10px"><span style="letter-spacing:0.17px">Description</span></div><div class="c" style="left:612px;top:10px"><span style="letter-spacing:0.18px">Beschreibung</span></div><svg class="mk" style="top:15.3px" width="15" height="12" viewBox="0 0 15 12" fill="none" stroke="#198754" stroke-width="1.8"><path d="M1 5.8l4.5 4.5L14 1.4"/></svg></div>
<div class="row" style="top:199.5px;height:40px"><input type="checkbox" class="cb" style="top:10px"><div class="c" style="left:51px;top:10px"><span style="letter-spacing:0.05px">AttributeDefinition_Asset_AssetInventor...</span></div><div class="c" style="left:312px;top:10px"><span style="letter-spacing:0.17px">Nr inwentaryzacyjny</span></div><div class="c" style="left:462px;top:10px"><span style="letter-spacing:0.09px">Inventory number</span></div><div class="c" style="left:612px;top:10px"><span style="letter-spacing:0.13px">Inventar nummer</span></div><svg class="mk" style="top:15.3px" width="15" height="12" viewBox="0 0 15 12" fill="none" stroke="#198754" stroke-width="1.8"><path d="M1 5.8l4.5 4.5L14 1.4"/></svg></div>
<div class="row" style="top:239.5px;height:53px"><input type="checkbox" class="cb" style="top:17.5px"><div class="c" style="left:51px;top:17.5px"><span style="letter-spacing:0.03px">AttributeDefinition_Asset_AssetFinancial...</span></div><div class="c" style="left:312px;top:7px"><span style="letter-spacing:0.11px">Księgowy nr</span><br><span style="letter-spacing:0.24px">inwentaryzacyjny</span></div><div class="c" style="left:462px;top:7px"><span style="letter-spacing:0.17px">Accountant inventory</span><br><span style="letter-spacing:0.2px">number</span></div><div class="c" style="left:612px;top:7px"><span style="letter-spacing:0.15px">Inventarnummer des</span><br><span style="letter-spacing:0.2px">Buchhalters</span></div><svg class="mk" style="top:22.3px" width="15" height="12" viewBox="0 0 15 12" fill="none" stroke="#198754" stroke-width="1.8"><path d="M1 5.8l4.5 4.5L14 1.4"/></svg></div>
<div class="row" style="top:292.5px;height:40px"><input type="checkbox" class="cb" style="top:10px"><div class="c" style="left:51px;top:10px"><span style="letter-spacing:-0.04px">AttributeDefinition_Asset_AssetVendor_L...</span></div><div class="c" style="left:312px;top:10px"><span style="letter-spacing:0.1px">Producent</span></div><div class="c" style="left:462px;top:10px"><span style="letter-spacing:0.21px">Manufacturer</span></div><div class="c" style="left:612px;top:10px"><span style="letter-spacing:0.15px">Hersteller</span></div><svg class="mk" style="top:15.3px" width="15" height="12" viewBox="0 0 15 12" fill="none" stroke="#198754" stroke-width="1.8"><path d="M1 5.8l4.5 4.5L14 1.4"/></svg></div>
<div class="row" style="top:332.5px;height:40px"><input type="checkbox" class="cb" style="top:10px"><div class="c" style="left:51px;top:10px"><span style="letter-spacing:0.03px">AttributeDefinition_Asset_AssetDistribut...</span></div><div class="c" style="left:312px;top:10px"><span style="letter-spacing:0.18px">Dostawca</span></div><div class="c" style="left:462px;top:10px"><span style="letter-spacing:-0.01px">Supplier</span></div><div class="c" style="left:612px;top:10px"><span style="letter-spacing:0.16px">Anbieter</span></div><svg class="mk" style="top:15.3px" width="15" height="12" viewBox="0 0 15 12" fill="none" stroke="#198754" stroke-width="1.8"><path d="M1 5.8l4.5 4.5L14 1.4"/></svg></div>
<div class="row" style="top:372.5px;height:40px"><input type="checkbox" class="cb" style="top:10px"><div class="c" style="left:51px;top:10px"><span style="letter-spacing:-0.01px">AttributeDefinition_Asset_AssetSerialNo...</span></div><div class="c" style="left:312px;top:10px"><span style="letter-spacing:-0.32px">S/N</span></div><div class="c" style="left:462px;top:10px"><span style="letter-spacing:0.02px">Serial number</span></div><div class="c" style="left:612px;top:10px"><span style="letter-spacing:0.13px">Seriennummer</span></div><svg class="mk" style="top:15.3px" width="15" height="12" viewBox="0 0 15 12" fill="none" stroke="#198754" stroke-width="1.8"><path d="M1 5.8l4.5 4.5L14 1.4"/></svg></div>
<div class="row" style="top:412.5px;height:40px"><input type="checkbox" class="cb" style="top:10px"><div class="c" style="left:51px;top:10px"><span style="letter-spacing:-0.06px">AttributeDefinition_Asset_AssetPartNo_L...</span></div><div class="c" style="left:312px;top:10px"><span style="letter-spacing:-0.69px">P/N</span></div><div class="c" style="left:462px;top:10px"><span style="letter-spacing:0.02px">Part number</span></div><div class="c" style="left:612px;top:10px"><span style="letter-spacing:0.18px">Artikelnummer</span></div><svg class="mk" style="top:15.3px" width="15" height="12" viewBox="0 0 15 12" fill="none" stroke="#198754" stroke-width="1.8"><path d="M1 5.8l4.5 4.5L14 1.4"/></svg></div>
<div class="row" style="top:452.5px;height:40px"><input type="checkbox" class="cb" style="top:10px"><div class="c" style="left:51px;top:10px"><span style="letter-spacing:0.02px">AttributeDefinition_Asset_AssetPurchas...</span></div><div class="c" style="left:312px;top:10px"><span style="letter-spacing:0.08px">Numer faktury</span></div><div class="c" style="left:462px;top:10px"><span style="letter-spacing:0.05px">Invoice number</span></div><div class="c" style="left:612px;top:10px"><span style="letter-spacing:0.14px">Rechnungsnummer</span></div><svg class="mk" style="top:15.3px" width="15" height="12" viewBox="0 0 15 12" fill="none" stroke="#198754" stroke-width="1.8"><path d="M1 5.8l4.5 4.5L14 1.4"/></svg></div>
<div class="row" style="top:492.5px;height:40px"><input type="checkbox" class="cb" style="top:10px"><div class="c" style="left:51px;top:10px"><span style="letter-spacing:0.02px">AttributeDefinition_Asset_AssetPurchas...</span></div><div class="c" style="left:312px;top:10px"><span style="letter-spacing:-0.04px">Data zakupu</span></div><div class="c" style="left:462px;top:10px"><span style="letter-spacing:0.01px">Date of purchase</span></div><div class="c" style="left:612px;top:10px"><span style="letter-spacing:0.01px">Kaufdatum</span></div><svg class="mk" style="top:15.3px" width="15" height="12" viewBox="0 0 15 12" fill="none" stroke="#198754" stroke-width="1.8"><path d="M1 5.8l4.5 4.5L14 1.4"/></svg></div>
<div class="row" style="top:532.5px;height:40px"><input type="checkbox" class="cb" style="top:10px"><div class="c" style="left:51px;top:10px"><span style="letter-spacing:0.02px">AttributeDefinition_Asset_AssetPurchas...</span></div><div class="c" style="left:312px;top:10px"><span style="letter-spacing:0.23px">Wartość netto</span></div><div class="c" style="left:462px;top:10px"><span style="letter-spacing:-0.05px">The net value</span></div><div class="c" style="left:612px;top:10px"><span style="letter-spacing:0.13px">Der Nettowert</span></div><svg class="mk" style="top:15.3px" width="15" height="12" viewBox="0 0 15 12" fill="none" stroke="#198754" stroke-width="1.8"><path d="M1 5.8l4.5 4.5L14 1.4"/></svg></div>
<div class="row" style="top:572.5px;height:53px"><input type="checkbox" class="cb" style="top:17.5px"><div class="c" style="left:51px;top:17.5px"><span style="letter-spacing:0.02px">AttributeDefinition_Asset_AssetPurchas...</span></div><div class="c" style="left:312px;top:17.5px"><span style="letter-spacing:-0.04px">Procent podatku VAT</span></div><div class="c" style="left:462px;top:17.5px"><span style="letter-spacing:0.09px">VAT percentage</span></div><div class="c" style="left:612px;top:7px"><span style="letter-spacing:0.32px">Mehrwertsteuer-</span><br><span style="letter-spacing:0.03px">Prozentsatz</span></div><svg class="mk" style="top:22.3px" width="15" height="12" viewBox="0 0 15 12" fill="none" stroke="#198754" stroke-width="1.8"><path d="M1 5.8l4.5 4.5L14 1.4"/></svg></div>
<div class="row hv" style="top:159.5px;height:40px"><input type="checkbox" class="cb" style="top:10px"><div class="c" style="left:51px;top:10px"><span style="letter-spacing:-0.03px">AttributeDefinition_Asset_AssetDNSNam...</span></div><div class="c" style="left:312px;top:10px"><span style="letter-spacing:-0.13px">Nazwa DNS</span></div><div class="c" style="left:462px;top:10px"><span style="letter-spacing:-0.21px">DNS name</span></div><div class="c" style="left:612px;top:10px"><span style="letter-spacing:-0.21px">DNS name</span></div><svg class="mk" style="top:15.3px" width="15" height="12" viewBox="0 0 15 12" fill="none" stroke="#198754" stroke-width="1.8"><path d="M1 5.8l4.5 4.5L14 1.4"/></svg></div>
</div>
<svg class="abs" style="left:1291px;top:475px" width="64" height="31" viewBox="0 0 64 31"><rect width="64" height="31" fill="#f8f8fa"/><polygon fill="#dfe4fb" points="30,15.5 22.5,2.51 7.5,2.51 0,15.5 7.5,28.49 22.5,28.49"/><polygon fill="#dfe4fb" points="63.5,15.5 56,2.51 41,2.51 33.5,15.5 41,28.49 56,28.49"/><g fill="none" stroke="#3236d0" stroke-width="1.2" stroke-linejoin="round" stroke-linecap="round"><path d="M14.5 11.2h-3.2a1.7 1.7 0 0 0-1.7 1.7v7.2a1.7 1.7 0 0 0 1.7 1.7h7.2a1.7 1.7 0 0 0 1.7-1.7v-3.3"/><path d="M19.2 9.7a1.4 1.4 0 0 1 2 2l-6.2 6.2-2.6.6.6-2.6z"/><path d="M42.9 11.4H53.8M46 11.2V9.9a.8.8 0 0 1 .8-.8h3.1a.8.8 0 0 1 .8.8v1.3M43.9 11.8v8.5a1.5 1.5 0 0 0 1.5 1.5h5.9a1.5 1.5 0 0 0 1.5-1.5v-8.5"/><path d="M45.9 13.6v6M48.4 13.6v6M50.9 13.6v6" stroke-width="1"/></g></svg>
<div class="gbox" style="left:1288.6px;top:472.5px;width:68.5px;height:36px;border-radius:7px"></div>
<div class="gnum" style="left:1262px;top:474px">3</div>
<div class="abs" style="left:1903px;top:0;width:17px;height:931px;background:#f1f1f1"></div>
<div class="abs" style="left:1905px;top:17px;width:13px;height:699px;background:#c1c1c1"></div>
<div class="abs" style="left:1907.5px;top:7px;width:0;height:0;border-left:4px solid transparent;border-right:4px solid transparent;border-bottom:4px solid #a3a3a3"></div>
<div class="abs" style="left:1907.5px;top:920px;width:0;height:0;border-left:4px solid transparent;border-right:4px solid transparent;border-top:4px solid #505050"></div>
</body>
</html>
